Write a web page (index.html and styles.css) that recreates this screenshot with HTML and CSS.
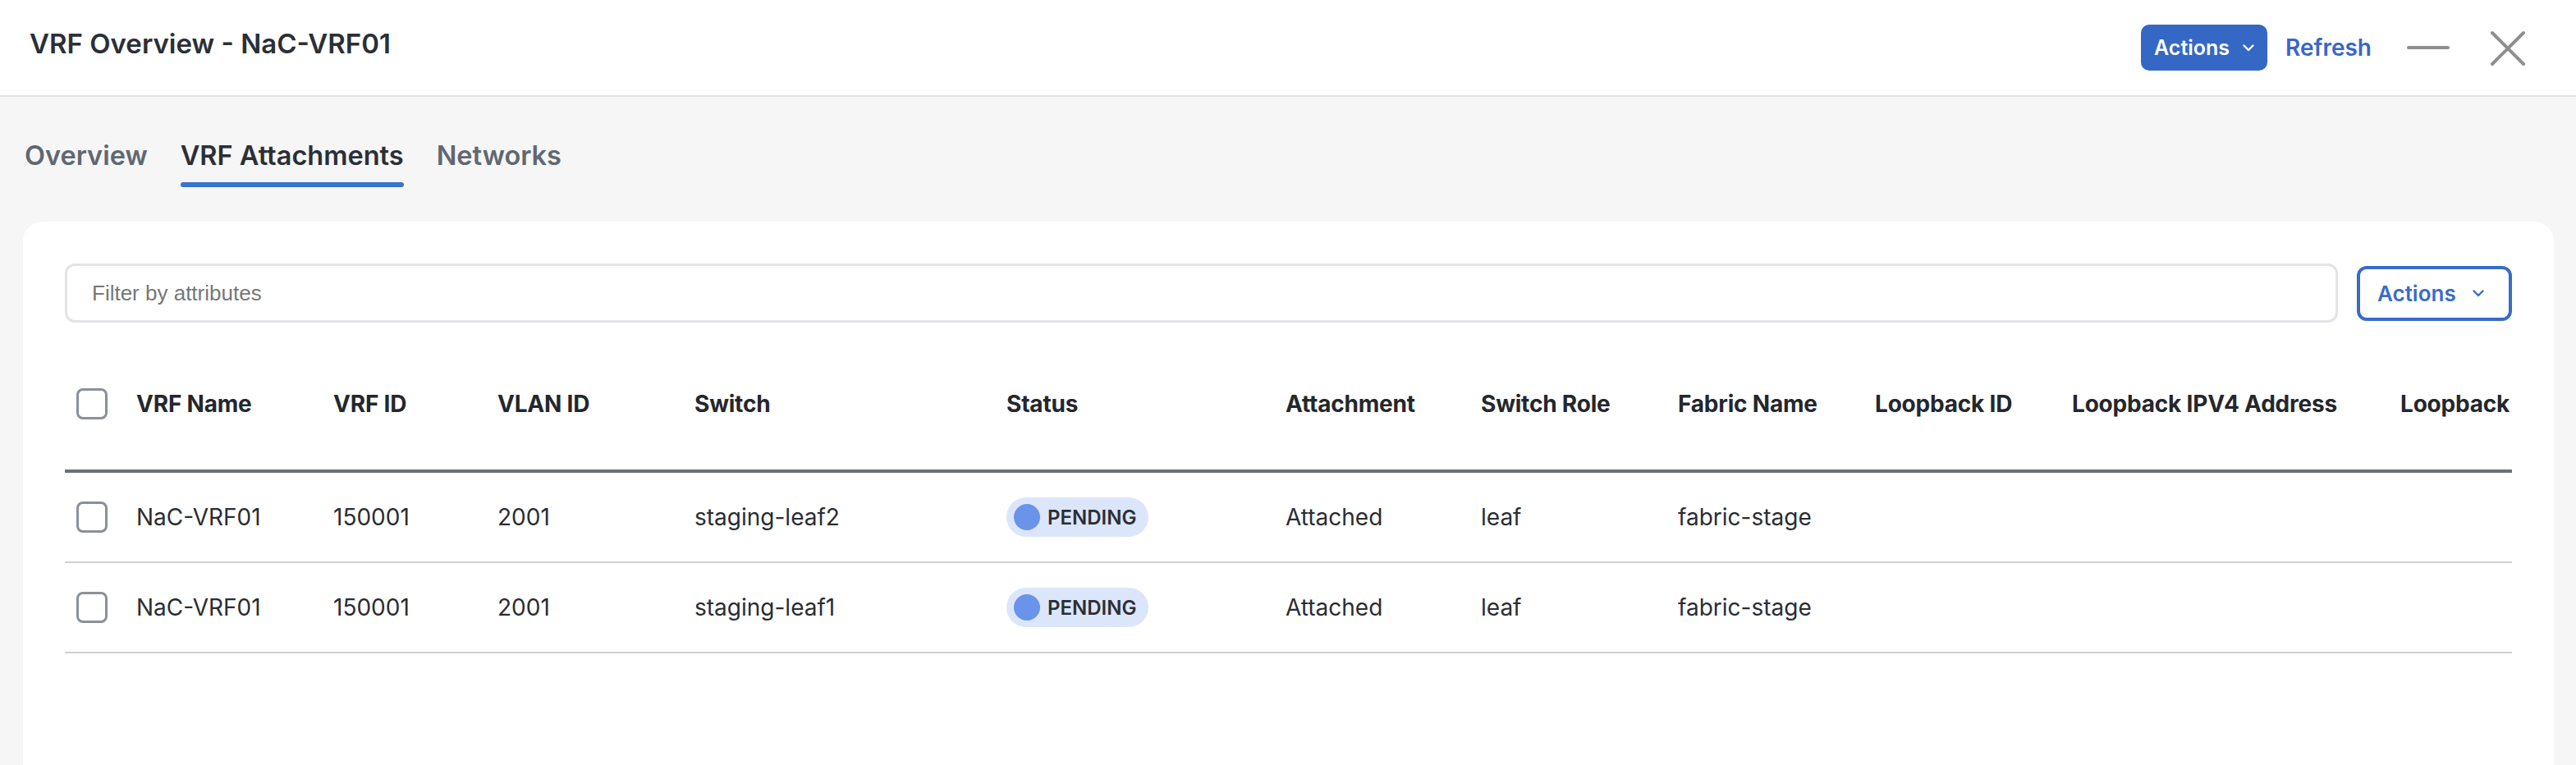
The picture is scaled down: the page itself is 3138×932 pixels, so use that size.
FILE: index.html
```html
<!DOCTYPE html>
<html lang="en">
<head>
    <meta charset="UTF-8">
    <title>VRF Overview - NaC-VRF01</title>
    <link rel="stylesheet" href="styles.css">
</head>
<body>
    <div class="panel">
        <header class="panel-header">
            <h1 class="panel-title">VRF Overview - NaC-VRF01</h1>
            <div class="header-actions">
                <button class="btn-primary">Actions
                    <svg class="chevron" viewBox="0 0 14 9" width="14" height="9"><path d="M1.5 1.5 L7 7 L12.5 1.5" fill="none" stroke="currentColor" stroke-width="2.4" stroke-linecap="round" stroke-linejoin="round"/></svg>
                </button>
                <a class="link-btn" href="#">Refresh</a>
                <svg class="icon-min" viewBox="0 0 52 8" width="52" height="8"><line x1="2" y1="4" x2="50" y2="4" stroke="#8e8e8e" stroke-width="4" stroke-linecap="round"/></svg>
                <svg class="icon-close" viewBox="0 0 44 44" width="44" height="44"><path d="M3 3 L41 41 M41 3 L3 41" stroke="#8e8e8e" stroke-width="4" stroke-linecap="round"/></svg>
            </div>
        </header>

        <nav class="tabs">
            <a class="tab" href="#">Overview</a>
            <a class="tab active" href="#">VRF Attachments</a>
            <a class="tab" href="#">Networks</a>
        </nav>

        <section class="card">
            <div class="toolbar">
                <input class="filter" type="text" placeholder="Filter by attributes">
                <button class="btn-outline">Actions
                    <svg class="chevron" viewBox="0 0 14 9" width="14" height="9"><path d="M1.5 1.5 L7 7 L12.5 1.5" fill="none" stroke="currentColor" stroke-width="2.4" stroke-linecap="round" stroke-linejoin="round"/></svg>
                </button>
            </div>

            <table class="grid">
                <colgroup>
                    <col style="width: 87px">
                    <col style="width: 240px">
                    <col style="width: 200px">
                    <col style="width: 240px">
                    <col style="width: 380px">
                    <col style="width: 340px">
                    <col style="width: 238px">
                    <col style="width: 240px">
                    <col style="width: 240px">
                    <col style="width: 240px">
                    <col style="width: 400px">
                    <col style="width: 136px">
                </colgroup>
                <thead>
                    <tr>
                        <th><span class="checkbox"></span></th>
                        <th>VRF Name</th>
                        <th>VRF ID</th>
                        <th>VLAN ID</th>
                        <th>Switch</th>
                        <th>Status</th>
                        <th>Attachment</th>
                        <th>Switch Role</th>
                        <th>Fabric Name</th>
                        <th>Loopback ID</th>
                        <th>Loopback IPV4 Address</th>
                        <th>Loopback</th>
                    </tr>
                </thead>
                <tbody>
                    <tr>
                        <td><span class="checkbox"></span></td>
                        <td>NaC-VRF01</td>
                        <td>150001</td>
                        <td>2001</td>
                        <td>staging-leaf2</td>
                        <td><span class="pill"><span class="dot"></span>PENDING</span></td>
                        <td>Attached</td>
                        <td>leaf</td>
                        <td>fabric-stage</td>
                        <td></td>
                        <td></td>
                        <td></td>
                    </tr>
                    <tr>
                        <td><span class="checkbox"></span></td>
                        <td>NaC-VRF01</td>
                        <td>150001</td>
                        <td>2001</td>
                        <td>staging-leaf1</td>
                        <td><span class="pill"><span class="dot"></span>PENDING</span></td>
                        <td>Attached</td>
                        <td>leaf</td>
                        <td>fabric-stage</td>
                        <td></td>
                        <td></td>
                        <td></td>
                    </tr>
                </tbody>
            </table>
        </section>
    </div>
</body>
</html>
```

FILE: styles.css
```css
html, body {
    margin: 0;
    padding: 0;
    height: 100%;
}

body {
    font-family: Inter, "Noto Sans", sans-serif;
    background-color: #f6f6f6;
    color: #2a2d33;
    overflow: hidden;
}

.panel {
    display: flex;
    flex-direction: column;
    height: 100%;
}

.panel-header {
    display: flex;
    align-items: center;
    justify-content: space-between;
    height: 116px;
    padding: 0 61px 0 36px;
    background-color: #fff;
    border-bottom: 2px solid #e2e2e2;
    flex-shrink: 0;
}

.panel-title {
    margin: 0;
    margin-top: -10px;
    font-size: 33px;
    font-weight: 600;
    color: #2b2f36;
}

.header-actions {
    display: flex;
    align-items: center;
}

.btn-primary {
    display: flex;
    align-items: center;
    gap: 16px;
    height: 56px;
    width: 154px;
    padding: 0 0 0 16px;
    background-color: #3568c4;
    color: #fff;
    border: none;
    border-radius: 10px;
    font-family: inherit;
    font-size: 25px;
    font-weight: 600;
    cursor: pointer;
}

.link-btn {
    margin-left: 22px;
    color: #3a66c8;
    font-size: 28px;
    font-weight: 600;
    text-decoration: none;
}

.icon-min {
    margin-left: 43px;
}

.icon-close {
    margin-left: 49px;
    margin-top: 2px;
}

.tabs {
    display: flex;
    gap: 40px;
    padding: 52px 0 0 30px;
    flex-shrink: 0;
}

.tab {
    position: relative;
    padding-bottom: 18px;
    font-size: 32.5px;
    line-height: 40px;
    font-weight: 600;
    color: #606871;
    text-decoration: none;
}

.tab.active {
    color: #2b2f36;
}

.tab.active::after {
    content: "";
    position: absolute;
    left: 0;
    right: 0;
    bottom: 0;
    height: 6px;
    border-radius: 3px;
    background-color: #3574d0;
}

.card {
    flex: 1;
    margin: 42px 27px 0 28px;
    padding: 51px 51px 0;
    background-color: #fff;
    border-radius: 24px 24px 0 0;
}

.toolbar {
    display: flex;
    align-items: center;
    gap: 23px;
}

.filter {
    flex: 1;
    height: 72px;
    box-sizing: border-box;
    padding: 0 30px;
    border: 3px solid #e3e4e7;
    border-radius: 12px;
    font-family: "Liberation Sans", Arial, sans-serif;
    font-size: 26px;
    color: #333;
    outline: none;
}

.filter::placeholder {
    color: #777;
}

.btn-outline {
    display: flex;
    align-items: center;
    gap: 20px;
    width: 189px;
    height: 67px;
    box-sizing: border-box;
    padding: 0 0 0 21px;
    background-color: #fff;
    color: #3a6bc9;
    border: 4px solid #3a6bc9;
    border-radius: 12px;
    font-family: inherit;
    font-size: 26px;
    font-weight: 600;
    cursor: pointer;
}

.grid {
    width: 100%;
    margin-top: 19px;
    border-collapse: collapse;
    table-layout: fixed;
}

.grid th,
.grid td {
    padding: 0;
    text-align: left;
    vertical-align: middle;
    white-space: nowrap;
    overflow: hidden;
}

.grid th {
    height: 160px;
    font-size: 28px;
    font-weight: 700;
    color: #24272d;
    letter-spacing: -0.2px;
    border-bottom: 4px solid #6b7075;
}

.grid td {
    height: 108px;
    font-size: 28px;
    font-weight: 400;
    color: #2a2d33;
    border-bottom: 2px solid #d0d0d0;
}

.grid th:first-child,
.grid td:first-child {
    padding-left: 14px;
}

.checkbox {
    display: block;
    width: 38px;
    height: 38px;
    box-sizing: border-box;
    border: 3px solid #8b9098;
    border-radius: 8px;
    background-color: #fff;
}

.pill {
    display: inline-flex;
    align-items: center;
    gap: 9px;
    height: 48px;
    padding: 0 15px 0 9px;
    border-radius: 24px;
    background-color: #dce6fb;
    font-size: 24px;
    font-weight: 600;
    color: #2b2f36;
}

.dot {
    width: 32px;
    height: 32px;
    border-radius: 50%;
    background-color: #6a94ea;
}
```
